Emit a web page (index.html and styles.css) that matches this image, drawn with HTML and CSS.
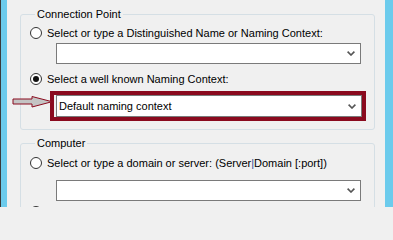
FILE: index.html
```html
<!DOCTYPE html>
<html>
<head>
<meta charset="utf-8">
<link rel="stylesheet" href="styles.css">
</head>
<body>
<div class="window">
  <div class="edge-left"></div>
  <div class="content">
    <fieldset class="group group-conn">
      <legend>Connection Point</legend>
      <label class="radio-row row-1"><input type="radio" name="cp">Select or type a Distinguished Name or Naming Context:</label>
      <div class="combo combo-1">
        <span class="value"></span>
        <svg class="chev" width="8" height="5" viewBox="0 0 8 5"><polyline points="0.6,0.6 4,4 7.4,0.6" fill="none" stroke="#555" stroke-width="1.6"/></svg>
      </div>
      <label class="radio-row row-2"><input type="radio" name="cp" checked>Select a well known Naming Context:</label>
      <div class="highlight">
        <div class="combo combo-2">
          <span class="value">Default naming context</span>
          <svg class="chev" width="8" height="5" viewBox="0 0 8 5"><polyline points="0.6,0.6 4,4 7.4,0.6" fill="none" stroke="#555" stroke-width="1.6"/></svg>
        </div>
      </div>
    </fieldset>
    <fieldset class="group group-comp">
      <legend>Computer</legend>
      <label class="radio-row row-3"><input type="radio" name="comp">Select or type a domain or server: (Server <span class="pipe">|</span> Domain [:port])</label>
      <div class="combo combo-3">
        <span class="value"></span>
        <svg class="chev" width="8" height="5" viewBox="0 0 8 5"><polyline points="0.6,0.6 4,4 7.4,0.6" fill="none" stroke="#555" stroke-width="1.6"/></svg>
      </div>
      <div class="radio-row row-4"><input type="radio" name="comp" aria-label="Default"></div>
    </fieldset>
  </div>
  <div class="edge-right"></div>
  <svg class="arrow" width="44" height="16" viewBox="0 0 44 16"><polygon points="1,4 20,4 20,1.5 40,6.7 20,12 20,9 1,9" fill="#c4c4c4" stroke="#8a0a1e" stroke-width="1"/></svg>
</div>
</body>
</html>
```

FILE: styles.css
```css
html, body {
  margin: 0;
  padding: 0;
  background: #f0f0f0;
  overflow: hidden;
}

.window {
  position: relative;
  display: flex;
  width: 393px;
  height: 207px;
  overflow: hidden;
  font-family: "Liberation Sans", Arial, sans-serif;
  font-size: 11px;
  color: #000;
  background: #f0f0f0;
}

.edge-left {
  width: 6px;
  flex: none;
  border-left: 1px solid #3a3a3a;
  background: #6ccbec;
}

.edge-right {
  width: 8px;
  flex: none;
  background: #6ccbec;
}

.content {
  flex: 1;
  padding: 6px 10px 0 13px;
  min-width: 0;
}

.group {
  margin: 0;
  padding: 0 0 8px 9px;
  border: 1px solid #d5dfe5;
  border-radius: 3px;
  min-width: 0;
}

.group legend {
  padding: 0 2px;
  margin-left: 5px;
  line-height: 16px;
}

.group-comp {
  margin-top: 5px;
}

.radio-row {
  display: flex;
  align-items: center;
  height: 16px;
  line-height: 16px;
  white-space: nowrap;
}

.radio-row input {
  appearance: none;
  -webkit-appearance: none;
  width: 12px;
  height: 12px;
  margin: 0 5px 0 0;
  border: 1px solid #333;
  border-radius: 50%;
  background: #fff;
  box-sizing: border-box;
  flex: none;
  position: relative;
}

.radio-row input:checked::after {
  content: "";
  position: absolute;
  left: 2px;
  top: 2px;
  width: 6px;
  height: 6px;
  border-radius: 50%;
  background: #111;
}

.row-1 { margin-top: 3px; }
.row-2 { margin-top: 7px; }
.row-3 { margin-top: 4px; }
.row-4 { margin-top: 3px; }

.pipe { color: #1f4f9c; }

.combo {
  display: flex;
  align-items: center;
  justify-content: space-between;
  box-sizing: border-box;
  height: 21px;
  border: 1px solid #7a7a7a;
  background: #fff;
  padding: 0 5px 0 3px;
}

.combo-1 {
  width: 305px;
  margin: 2px 0 0 26px;
}

.combo-3 {
  width: 305px;
  margin: 9px 0 0 26px;
}

.highlight {
  box-sizing: border-box;
  width: 316px;
  height: 30px;
  margin: 4px 0 0 20px;
  border: 4px solid #8a0a1e;
  padding: 0 0 0 2px;
}

.combo-2 {
  width: 306px;
  height: 22px;
  padding-left: 2px;
}

.value {
  line-height: 16px;
}

.arrow {
  position: absolute;
  left: 12px;
  top: 95px;
}
```
